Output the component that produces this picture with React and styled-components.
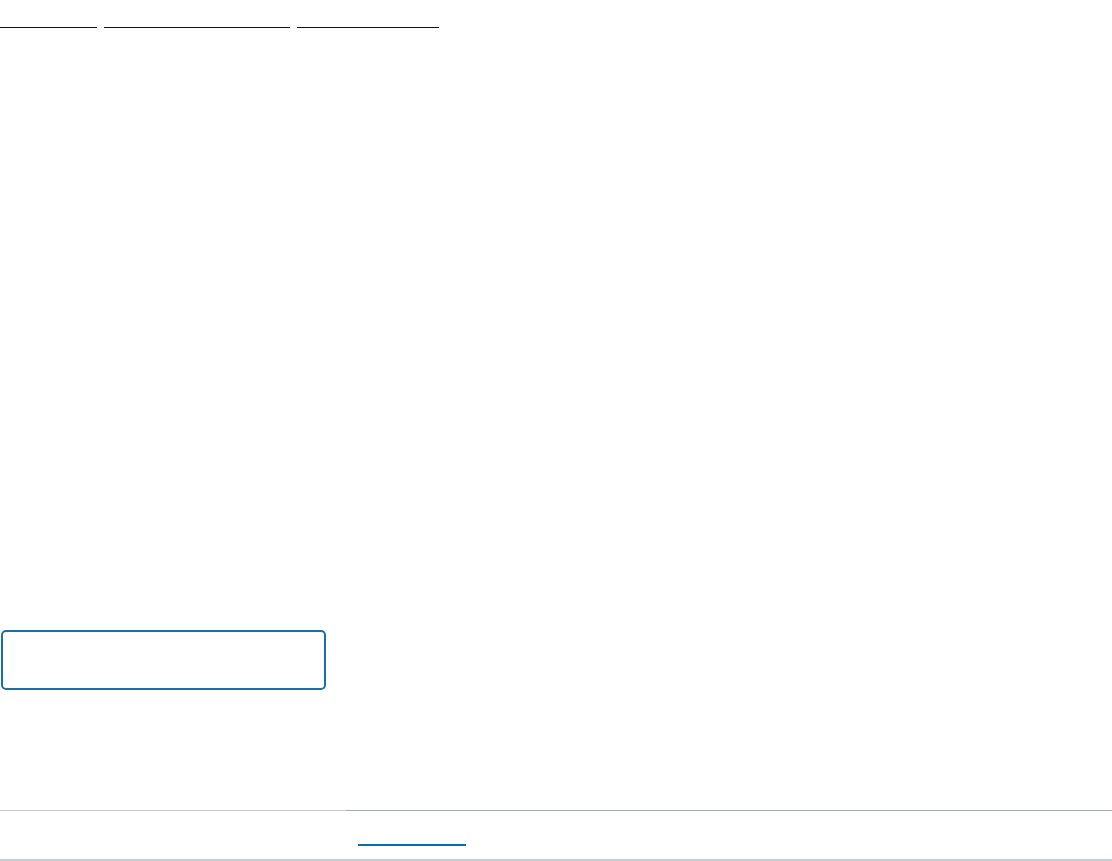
import styled, { createGlobalStyle } from "styled-components";

const GlobalStyle = createGlobalStyle`
    html, body {
        margin: 0;
        padding: 0;
        background: #ffffff;
        font-family: "Liberation Sans", Arial, sans-serif;
    }
`;

export default function App() {
    return (
        <Page>
            <GlobalStyle />
            <Nav>
                <NavLink href="#" $width={97}>Accueil</NavLink>
                <NavLink href="#" $width={186}>Nouvelle demande</NavLink>
                <NavLink href="#" $width={142}>Mes demandes</NavLink>
            </Nav>
            <Main>
                <SearchField type="text" aria-label="Rechercher" />
            </Main>
            <Footer>
                <FooterSide />
                <FooterTabs>
                    <Tab href="#">Aide</Tab>
                </FooterTabs>
            </Footer>
        </Page>
    );
}

const Page = styled.div`
    height: 861px;
    display: flex;
    flex-direction: column;
`;

const Nav = styled.nav`
    display: flex;
    gap: 7px;
    height: 28px;
    align-items: flex-end;
`;

const NavLink = styled.a`
    display: block;
    width: ${(p) => p.$width}px;
    height: 18px;
    font-size: 14px;
    color: transparent;
    text-decoration: none;
    overflow: hidden;
    border-bottom: 1px solid #111111;
`;

const Main = styled.main`
    flex: 1;
    display: flex;
    flex-direction: column;
    justify-content: flex-end;
    padding: 0 0 120px 1px;
`;

const SearchField = styled.input`
    box-sizing: border-box;
    width: 325px;
    height: 60px;
    border: 2px solid #1a6fa8;
    border-radius: 5px;
    background: #ffffff;
    outline: none;
    padding: 0 12px;
    font-family: inherit;
    font-size: 14px;
`;

const Footer = styled.footer`
    height: 51px;
    display: grid;
    grid-template-columns: 346px 1fr;
    border-bottom: 2px solid #c8cdd1;
    box-sizing: border-box;
`;

const FooterSide = styled.div`
    border-top: 1px solid #c5cbd0;
`;

const FooterTabs = styled.div`
    border-top: 1px solid #a2abb3;
    display: flex;
    align-items: flex-end;
    padding: 0 0 13px 12px;
`;

const Tab = styled.a`
    display: block;
    width: 108px;
    height: 20px;
    color: transparent;
    text-decoration: none;
    overflow: hidden;
    font-size: 14px;
    border-bottom: 2px solid #0a6db0;
`;
